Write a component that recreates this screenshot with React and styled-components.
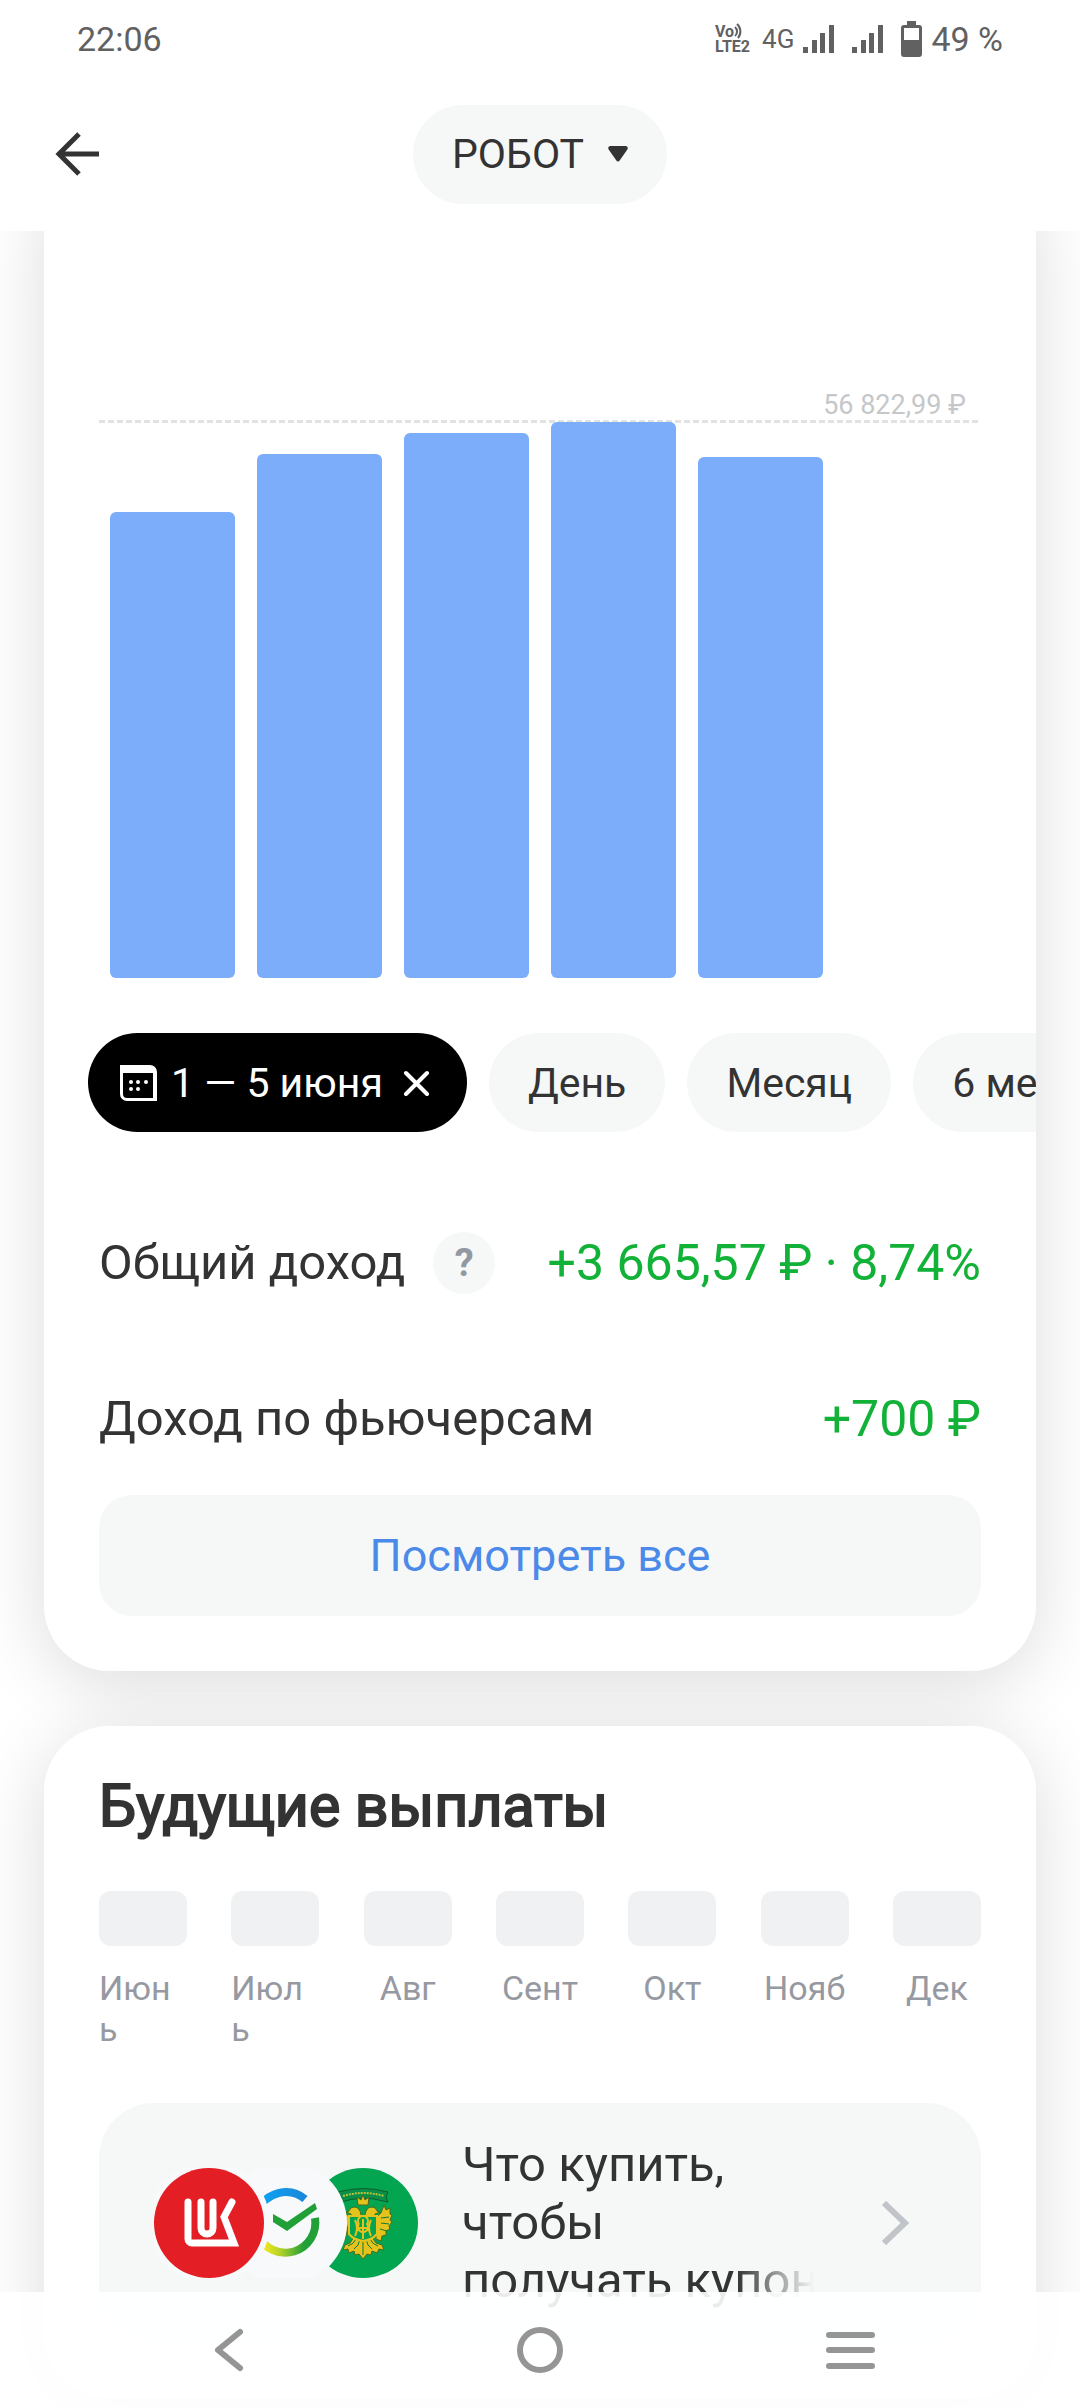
import styled, { createGlobalStyle } from "styled-components";

const GlobalStyle = createGlobalStyle`
* {
    box-sizing: border-box;
}
body {
    margin: 0;
    background-color: #fff;
    font-family: Roboto, "Noto Sans", sans-serif;
    color: #333;
}
button {
    border: none;
    font-family: inherit;
    color: inherit;
    cursor: pointer;
}
svg {
    display: block;
    flex-shrink: 0;
}
`

const Screen = styled.div`
    position: relative;
    display: flex;
    flex-direction: column;
    height: 100vh;
    overflow: hidden;
`

const StatusBar = styled.div`
    display: flex;
    align-items: center;
    justify-content: space-between;
    height: 77px;
    padding: 0 77px;
    flex-shrink: 0;
    font-size: 34px;
    color: #616161;
`
const StatusIcons = styled.div`
    display: flex;
    align-items: center;
    gap: 9px;
`
const Network = styled.span`
    font-size: 26px;
`
const SignalPair = styled.div`
    display: flex;
    gap: 18px;
    margin-right: 9px;
`

const Header = styled.header`
    display: grid;
    grid-template-columns: 1fr auto 1fr;
    align-items: center;
    height: 154px;
    padding: 0 44px;
    flex-shrink: 0;
`
const BackBtn = styled.button`
    justify-self: start;
    padding: 11px;
    background: none;
`
const AccountBtn = styled.button`
    display: flex;
    align-items: center;
    gap: 24px;
    height: 99px;
    padding: 0 39px;
    border-radius: 50px;
    background-color: #f6f8f8;
    font-size: 41px;
`

const Content = styled.main`
    flex: 1;
    min-height: 0;
    overflow: hidden;
    padding: 0 44px;
    display: flex;
    flex-direction: column;
    gap: 55px;
    isolation: isolate;
`
const Card = styled.section`
    position: relative;
    flex-shrink: 0;
    margin-top: ${(props) => (props.$scrolled ? "-66px" : "0")};
    padding: ${(props) => (props.$scrolled ? "257px" : "45px")} 55px 55px;
    border-radius: 66px;
    background-color: #fff;

    /* the shadow stays under both cards */
    &::before {
        content: "";
        position: absolute;
        inset: 0;
        z-index: -1;
        border-radius: 66px;
        box-shadow: 0 12px 72px rgba(0, 0, 0, 0.14);
    }
`

const Chart = styled.div`
    position: relative;
    display: flex;
    align-items: flex-end;
    gap: 22px;
    height: 556px;
    padding: 0 11px;
`
const Limit = styled.div`
    position: absolute;
    top: -2px;
    left: 0;
    right: 3px;
    height: 3px;
    background: repeating-linear-gradient(90deg, #e0e2e3 0 6px, transparent 6px 9px);
`
const LimitLabel = styled.span`
    position: absolute;
    right: 12px;
    bottom: 2px;
    font-size: 27px;
    line-height: 32px;
    color: #c5c7ca;
    white-space: nowrap;
`
const Bar = styled.div`
    position: relative;
    flex: 1;
    border-radius: 6px;
    background-color: #7cadfa;
`

const Periods = styled.div`
    display: flex;
    gap: 22px;
    margin: 55px -55px 0 -11px;
    overflow: hidden;
`
const Chip = styled.button`
    display: flex;
    align-items: center;
    gap: 14px;
    flex-shrink: 0;
    height: 99px;
    padding: 0 ${(props) => (props.$active ? "32px" : "39px")};
    border-radius: 50px;
    background-color: ${(props) => (props.$active ? "#000" : "#f6f8f8")};
    color: ${(props) => (props.$active ? "#fff" : "#333")};
    font-size: 41px;
    white-space: nowrap;
`

const Stats = styled.div`
    display: flex;
    flex-direction: column;
    gap: 94px;
    margin: 100px 0 45px;
`
const StatRow = styled.div`
    display: flex;
    align-items: center;
    justify-content: space-between;
    min-height: 62px;
    font-size: 49px;
    line-height: 58px;
    white-space: nowrap;
`
const StatName = styled.div`
    display: flex;
    align-items: center;
    gap: 28px;
`
const StatValue = styled.span`
    font-size: 50px;
    color: #12b137;
`
const HelpBtn = styled.button`
    width: 62px;
    height: 62px;
    padding: 0;
    border-radius: 50%;
    background-color: #f6f8f8;
    color: #9299a2;
    font-size: 38px;
    font-weight: 700;
`
const ShowAllBtn = styled.button`
    display: block;
    width: 100%;
    height: 121px;
    border-radius: 33px;
    background-color: #f6f8f8;
    color: #4b8ae8;
    font-size: 45px;
`

const Title = styled.h2`
    margin: 0 0 50px;
    font-size: 59px;
    line-height: 70px;
    font-weight: 400;
    -webkit-text-stroke: 2px #333;
`
const Months = styled.div`
    display: flex;
    justify-content: space-between;
    height: 159px;
`
const Month = styled.div`
    display: flex;
    flex-direction: column;
    align-items: center;
    gap: 22px;
    width: 88px;
`
const MonthBlock = styled.div`
    width: 100%;
    height: 55px;
    flex-shrink: 0;
    border-radius: 12px;
    background-color: #eff1f3;
`
const MonthLabel = styled.span`
    max-width: 100%;
    font-size: 34px;
    line-height: 41px;
    color: #9699a1;
    word-break: break-all;
`

const Banner = styled.a`
    display: flex;
    align-items: center;
    height: 240px;
    margin-top: 53px;
    padding: 0 72px 0 55px;
    border-radius: 55px;
    background-color: #f6f8f8;
    color: inherit;
    text-decoration: none;
`
const BannerText = styled.div`
    flex: 1;
    min-width: 0;
    margin: 0 68px 0 44px;
    font-size: 49px;
    line-height: 58px;
`
const FadedLine = styled.span`
    display: block;
    overflow: hidden;
    white-space: nowrap;
    mask-image: linear-gradient(90deg, #000 78%, transparent);
`

const NavBar = styled.nav`
    position: absolute;
    left: 0;
    right: 0;
    bottom: 0;
    z-index: 2;
    display: grid;
    grid-template-columns: repeat(3, 1fr);
    justify-items: center;
    align-items: center;
    height: 116px;
    padding: 0 74px;
    background-color: rgba(255, 255, 255, 0.9);
`
const NavBtn = styled.button`
    padding: 8px;
    background: none;
`

function VolteIcon() {
  return (
    <svg width="38" height="32" viewBox="0 0 38 32" fill="#616161">
      <text x="0" y="14" fontFamily="Roboto, sans-serif" fontSize="16" fontWeight="700">Vo</text>
      <text x="0" y="29" fontFamily="Roboto, sans-serif" fontSize="16" fontWeight="700">LTE2</text>
      <path d="M20 4a6 6 0 0 1 0 9M22 1a10 10 0 0 1 1 14" fill="none" stroke="#616161" strokeWidth="2" />
    </svg>
  )
}

function SignalIcon() {
  return (
    <svg width="31" height="28" viewBox="0 0 31 28" fill="#616161">
      <rect x="0" y="22" width="5" height="6" />
      <rect x="9" y="15" width="5" height="13" />
      <rect x="17" y="8" width="5" height="20" />
      <rect x="26" y="0" width="5" height="28" />
    </svg>
  )
}

function BatteryIcon() {
  return (
    <svg width="21" height="36" viewBox="0 0 21 36" fill="#616161">
      <path fillRule="evenodd" d="M6 0h9v4h3a3 3 0 0 1 3 3v26a3 3 0 0 1-3 3H3a3 3 0 0 1-3-3V7a3 3 0 0 1 3-3h3zM3 7v12h15V7z" />
    </svg>
  )
}

function CalendarIcon() {
  return (
    <svg width="37" height="36" viewBox="0 0 37 36" fill="#fff">
      <path fillRule="evenodd" d="M0 0h30a7 7 0 0 1 7 7v29H7a7 7 0 0 1-7-7zM3 8v21a4 4 0 0 0 4 4h26V8z" />
      <circle cx="11" cy="17" r="2" />
      <circle cx="18" cy="17" r="2" />
      <circle cx="26" cy="17" r="2" />
      <circle cx="11" cy="24" r="2" />
      <circle cx="18" cy="24" r="2" />
    </svg>
  )
}

function CompanyLogos() {
  return (
    <svg width="264" height="110" viewBox="0 0 264 110">
      <defs>
        <linearGradient id="sky" x1="110" y1="0" x2="154" y2="0" gradientUnits="userSpaceOnUse">
          <stop offset="0" stopColor="#0fa0f0" />
          <stop offset="1" stopColor="#1a86d8" />
        </linearGradient>
        <linearGradient id="leaf" x1="110" y1="0" x2="150" y2="0" gradientUnits="userSpaceOnUse">
          <stop offset="0" stopColor="#f2e81c" />
          <stop offset="0.4" stopColor="#b5d22c" />
          <stop offset="1" stopColor="#21a038" />
        </linearGradient>
      </defs>
      <circle cx="209" cy="55" r="55" fill="#04a550" />
      {/* ribbon and crown */}
      <path d="M184 24q25-7 50 0l-2 5 2 5-5-1q-20-6-42 1l1-4z" fill="#0a8f46" stroke="#0b5c2c" strokeWidth="1" />
      <path d="M189 28q20-6 41 0" fill="none" stroke="#b9c23a" strokeWidth="2" strokeDasharray="2 1" />
      <g fill="#e6c31c" stroke="#4c6a1c" strokeWidth="1">
        <path d="M204 37l-1-8 4 3 2-5 2 5 4-3-1 8z" />
        {/* heads */}
        <path d="M207 47q-1-8-7-8-4 0-5 4l-3 1 5 2 1 5h9zM211 47q1-8 7-8 4 0 5 4l3 1-5 2-1 5h-9z" />
        {/* wings */}
        <path d="M222 49l5-4 3-8 2 5 4-2v6l2 1-2 5 2 2-3 4 1 3-4 2v4l-4 1-1 5-5-2z" />
        <path d="M196 49l-5-4-3-8-2 5-4-2v6l4 28 5-2z" />
        {/* tail and legs */}
        <path d="M209 91l-4-5-4 1-1-4-5 2-1-4-5 1 2-5 5-2 4-6h18l4 6 6 2 2 5-5-1-2 4-5-2-1 4-4-1z" />
      </g>
      <path d="M200 81q5-3 6-10M194 78q6-2 8-7M218 81q-5-3-6-10M224 78q-6-2-8-7M209 72v15M227 50l8-1M227 55l8 1M226 61l7 2" fill="none" stroke="#0b7a3a" strokeWidth="1" />
      {/* shield */}
      <path d="M195 48h28v18q-5 6-14 7-9-1-14-7z" fill="#04a550" stroke="#e6c31c" strokeWidth="2" />
      <path d="M201 52q4 8 0 16M217 52q-4 8 0 16M209 51v20M203 60h12M205 56a5 5 0 1 0 8 0a5 5 0 1 0-8 0" fill="none" stroke="#e6c31c" strokeWidth="2" />

      <circle cx="132" cy="55" r="61" fill="#f7f9fa" />
      <g fill="none" strokeWidth="8">
        <path d="M104 43a30 30 0 0 1 47-12" stroke="url(#sky)" />
        <path d="M161 50a30 30 0 0 1-57 17" stroke="url(#leaf)" />
      </g>
      <path d="M119 46l14 8 28-19 2 6-30 22-14-9z" fill="#21a038" />
      <circle cx="55" cy="55" r="61" fill="#f7f9fa" />
      <circle cx="55" cy="55" r="55" fill="#e31e24" />
      <g fill="none" stroke="#fff" strokeWidth="7" strokeLinecap="round">
        <path d="M34 34v37a4 4 0 0 0 4 4h42L70 49l8-15" strokeMiterlimit="8" />
        <path d="M47 34v26a6 6 0 0 0 12 0V34" />
      </g>
    </svg>
  )
}

const bars = [
  { day: 1, size: 466 },
  { day: 2, size: 524 },
  { day: 3, size: 545 },
  { day: 4, size: 556 },
  { day: 5, size: 521 },
  { day: 6, size: 0 },
]

const months = ["Июнь", "Июль", "Авг", "Сент", "Окт", "Нояб", "Дек"]

function App() {
  return (
    <Screen>
      <GlobalStyle />
      <StatusBar>
        <span>22:06</span>
        <StatusIcons>
          <VolteIcon />
          <Network>4G</Network>
          <SignalPair>
            <SignalIcon />
            <SignalIcon />
          </SignalPair>
          <BatteryIcon />
          <span>49 %</span>
        </StatusIcons>
      </StatusBar>

      <Header>
        <BackBtn aria-label="Назад">
          <svg width="44" height="44" viewBox="0 0 44 44" fill="none" stroke="#333" strokeWidth="5">
            <path d="M24 2L4 22l20 20M4 22h40" />
          </svg>
        </BackBtn>
        <AccountBtn>
          РОБОТ
          <svg width="20" height="16" viewBox="0 0 20 16" fill="#333">
            <path d="M2 0h16q3 1 1 4l-7 10q-2 3-4 0L1 4q-2-3 1-4z" />
          </svg>
        </AccountBtn>
      </Header>

      <Content>
        <Card $scrolled>
          <Chart>
            <Limit>
              <LimitLabel>56 822,99 ₽</LimitLabel>
            </Limit>
            {bars.map((bar) => (
              <Bar key={bar.day} style={{ height: `${(bar.size / 556) * 100}%` }} />
            ))}
          </Chart>
          <Periods>
            <Chip $active>
              <CalendarIcon />
              1 — 5 июня
              <svg width="38" height="26" viewBox="0 0 38 26" fill="none" stroke="#fff" strokeWidth="4" strokeLinecap="round">
                <path d="M9 3l21 21M30 3L9 24" />
              </svg>
            </Chip>
            <Chip>День</Chip>
            <Chip>Месяц</Chip>
            <Chip>6 месяцев</Chip>
          </Periods>
          <Stats>
            <StatRow>
              <StatName>
                Общий доход
                <HelpBtn>?</HelpBtn>
              </StatName>
              <StatValue>+3 665,57 ₽ · 8,74%</StatValue>
            </StatRow>
            <StatRow>
              <StatName>Доход по фьючерсам</StatName>
              <StatValue>+700 ₽</StatValue>
            </StatRow>
          </Stats>
          <ShowAllBtn>Посмотреть все</ShowAllBtn>
        </Card>

        <Card>
          <Title>Будущие выплаты</Title>
          <Months>
            {months.map((month) => (
              <Month key={month}>
                <MonthBlock />
                <MonthLabel>{month}</MonthLabel>
              </Month>
            ))}
          </Months>
          <Banner href="#coupons">
            <CompanyLogos />
            <BannerText>
              Что купить, чтобы
              <FadedLine>получать купоны</FadedLine>
            </BannerText>
            <svg width="27" height="44" viewBox="0 0 27 44" fill="none" stroke="#c1c5c9" strokeWidth="6">
              <path d="M2 2l21 20L2 42" />
            </svg>
          </Banner>
        </Card>
      </Content>

      <NavBar>
        <NavBtn aria-label="Назад">
          <svg width="30" height="44" viewBox="0 0 30 44" fill="none" stroke="#959595" strokeWidth="6" strokeLinecap="round" strokeLinejoin="round">
            <path d="M26 4L4 22l22 18" />
          </svg>
        </NavBtn>
        <NavBtn aria-label="Домой">
          <svg width="48" height="48" viewBox="0 0 48 48" fill="none" stroke="#959595" strokeWidth="6">
            <circle cx="24" cy="24" r="20" />
          </svg>
        </NavBtn>
        <NavBtn aria-label="Меню">
          <svg width="49" height="38" viewBox="0 0 49 38" stroke="#959595" strokeWidth="6" strokeLinecap="round">
            <path d="M3 4h43M3 19h43M3 35h43" />
          </svg>
        </NavBtn>
      </NavBar>
    </Screen>
  )
}

export default App
